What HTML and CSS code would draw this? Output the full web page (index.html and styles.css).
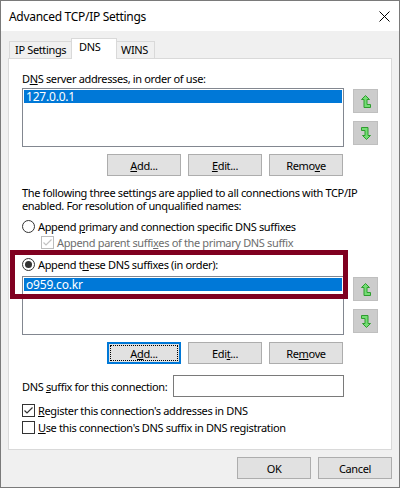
FILE: index.html
```html
<!DOCTYPE html>
<html lang="en">
<head>
  <meta charset="UTF-8" />
  <title>Advanced TCP/IP Settings</title>
  <link rel="stylesheet" href="styles.css">
</head>
<body>
<div class="window">
  <div class="titlebar">
    <span class="title">Advanced TCP/IP Settings</span>
    <svg class="close" width="11" height="11" viewBox="0 0 11 11">
      <path d="M0.5 0.5 L10.5 10.5 M10.5 0.5 L0.5 10.5" stroke="#000" stroke-width="1" fill="none"/>
    </svg>
  </div>

  <div class="content">
    <div class="tabs">
      <div class="tab tab-ip">IP Settings</div>
      <div class="tab tab-dns active">DNS</div>
      <div class="tab tab-wins">WINS</div>
    </div>

    <div class="panel">
      <div class="label">D<u>N</u>S server addresses, in order of use:</div>
      <div class="list-row">
        <div class="listbox">
          <div class="item selected">127.0.0.1</div>
        </div>
        <div class="arrows">
          <div class="arrow">
            <svg width="10" height="13" viewBox="0 0 10 13"><polygon class="arr" points="4.5,0.5 8.5,4.5 6,4.5 6,9.5 9.5,9.5 9.5,12.5 3,12.5 3,4.5 0.5,4.5"/></svg>
          </div>
          <div class="arrow">
            <svg width="10" height="13" viewBox="0 0 10 13"><polygon class="arr" transform="rotate(180 5 6.5)" points="4.5,0.5 8.5,4.5 6,4.5 6,9.5 9.5,9.5 9.5,12.5 3,12.5 3,4.5 0.5,4.5"/></svg>
          </div>
        </div>
      </div>
      <div class="btn-row">
        <div class="btn"><u>A</u>dd...</div>
        <div class="btn"><u>E</u>dit...</div>
        <div class="btn">Remo<u>v</u>e</div>
      </div>

      <p class="note">The following three settings are applied to all connections with TCP/IP enabled. For resolution of unqualified names:</p>

      <div class="opt opt-first">
        <span class="radio"></span>
        <span>Append <u>p</u>rimary and connection specific DNS suffixes</span>
      </div>
      <div class="opt opt-sub disabled">
        <span class="check checked">
          <svg width="11" height="11" viewBox="0 0 11 11"><polyline points="1.5,5.5 4,8 9.5,2.5" fill="none" stroke="#c2c2c2" stroke-width="1.2"/></svg>
        </span>
        <span>Append parent suffi<u>x</u>es of the primary DNS suffix</span>
      </div>

      <div class="opt opt-second">
        <span class="radio on"></span>
        <span>Append t<u>h</u>ese DNS suffixes (in order):</span>
      </div>
      <div class="list-row list-row-2">
        <div class="listbox">
          <div class="item selected">o959.co.kr</div>
        </div>
        <div class="arrows">
          <div class="arrow">
            <svg width="10" height="13" viewBox="0 0 10 13"><polygon class="arr" points="4.5,0.5 8.5,4.5 6,4.5 6,9.5 9.5,9.5 9.5,12.5 3,12.5 3,4.5 0.5,4.5"/></svg>
          </div>
          <div class="arrow">
            <svg width="10" height="13" viewBox="0 0 10 13"><polygon class="arr" transform="rotate(180 5 6.5)" points="4.5,0.5 8.5,4.5 6,4.5 6,9.5 9.5,9.5 9.5,12.5 3,12.5 3,4.5 0.5,4.5"/></svg>
          </div>
        </div>
      </div>
      <div class="btn-row">
        <div class="btn focused">A<u>d</u>d...</div>
        <div class="btn">Edi<u>t</u>...</div>
        <div class="btn">Re<u>m</u>ove</div>
      </div>

      <div class="suffix-row">
        <span class="suffix-label">DNS <u>s</u>uffix for this connection:</span>
        <div class="input"></div>
      </div>

      <div class="opt opt-check first">
        <span class="check checked">
          <svg width="11" height="11" viewBox="0 0 11 11"><polyline points="1.5,5.5 4,8 9.5,2.5" fill="none" stroke="#333" stroke-width="1.2"/></svg>
        </span>
        <span><u>R</u>egister this connection's addresses in DNS</span>
      </div>
      <div class="opt opt-check">
        <span class="check"></span>
        <span><u>U</u>se this connection's DNS suffix in DNS registration</span>
      </div>

      <!-- annotation frame drawn over the suffix option -->
      <div class="highlight"></div>
    </div>

    <div class="footer">
      <div class="btn">OK</div>
      <div class="btn">Cancel</div>
    </div>
  </div>
</div>
</body>
</html>
```

FILE: styles.css
```css
* {
  box-sizing: border-box;
}
body {
  margin: 0;
  font-family: "Noto Sans", sans-serif;
  font-size: 11px;
  letter-spacing: -0.35px;
  color: #000;
  background: #fff;
}
u {
  text-underline-offset: 1px;
}

.window {
  width: 400px;
  height: 488px;
  border: 1px solid #7a7a7a;
  background: #f0f0f0;
  display: flex;
  flex-direction: column;
}
.titlebar {
  height: 30px;
  background: #fff;
  display: flex;
  align-items: center;
  justify-content: space-between;
  padding: 0 9px 0 8px;
}
.title {
  font-size: 12px;
  letter-spacing: -0.3px;
}
.close {
  display: block;
}

.content {
  padding: 7px 7px 0;
}

/* tabs */
.tabs {
  display: flex;
  align-items: flex-end;
  height: 21px;
  padding-left: 1px;
  margin-bottom: -1px;
  position: relative;
  z-index: 1;
}
.tab {
  height: 17px;
  margin-bottom: 1px;
  margin-right: -1px;
  border: 1px solid #d9d9d9;
  border-bottom: none;
  background: #f0f0f0;
  line-height: 16px;
  white-space: nowrap;
}
.tab-ip {
  width: 63px;
  padding-left: 5px;
}
.tab-dns {
  width: 46px;
  padding-left: 7px;
}
.tab-wins {
  width: 39px;
  padding-left: 4px;
}
.tab.active {
  height: 21px;
  margin-bottom: 0;
  background: #fff;
  position: relative;
  z-index: 2;
}

.panel {
  position: relative;
  height: 392px;
  background: #fff;
  border: 1px solid #d9d9d9;
  padding: 12px 13px 0;
}

.label {
  line-height: 15px;
  height: 15px;
}

.list-row {
  display: flex;
  gap: 9px;
  margin-top: 2px;
}
.list-row-2 {
  margin-top: 4px;
}
.listbox {
  width: 322px;
  height: 59px;
  border: 1px solid #828790;
  padding: 1px;
  background: #fff;
}
.item {
  height: 13px;
  line-height: 13px;
  padding-left: 2px;
  font-size: 12px;
  letter-spacing: -0.2px;
}
.item.selected {
  background: #0078d7;
  color: #fff;
}
.arrows {
  display: flex;
  flex-direction: column;
  gap: 8px;
  margin-top: 1px;
}
.arrow {
  width: 25px;
  height: 24px;
  background: #cccccc;
  border: 1px solid #bfbfbf;
  display: flex;
  align-items: center;
  justify-content: center;
}
.arrow svg {
  display: block;
}
.arr {
  fill: #74dd74;
  stroke: #2e9c2e;
  stroke-width: 1;
}

.btn-row {
  display: flex;
  justify-content: flex-end;
  gap: 7px;
  width: 321px;
  margin-top: 7px;
}
.btn {
  position: relative;
  width: 74px;
  height: 22px;
  background: #e1e1e1;
  border: 1px solid #adadad;
  display: flex;
  align-items: center;
  justify-content: center;
  line-height: 15px;
}
.btn.focused {
  border: 2px solid #0078d7;
}
.btn.focused::after {
  content: "";
  position: absolute;
  left: 1px;
  top: 1px;
  right: 1px;
  bottom: 1px;
  border: 1px dotted #000;
}

.note {
  margin: 10px 0 0;
  line-height: 13px;
}

.opt {
  display: flex;
  align-items: center;
  gap: 3px;
  height: 16px;
  white-space: nowrap;
}
.opt-first {
  margin-top: 6px;
}
.opt-sub {
  padding-left: 19px;
}
.opt-second {
  margin-top: 6px;
}
.opt.disabled {
  color: #6d6d6d;
}
.opt-check {
  height: 17px;
}
.opt-check.first {
  margin-top: 5px;
}

.radio {
  width: 13px;
  height: 13px;
  border: 1px solid #333;
  border-radius: 50%;
  background: #fff;
  display: flex;
  align-items: center;
  justify-content: center;
  flex: none;
}
.radio.on::after {
  content: "";
  width: 7px;
  height: 7px;
  border-radius: 50%;
  background: #333;
}
.check {
  width: 13px;
  height: 13px;
  border: 1px solid #333;
  background: #fff;
  flex: none;
}
.check svg {
  display: block;
}
.disabled .check {
  border-color: #bcbcbc;
}

.suffix-row {
  display: flex;
  align-items: center;
  margin-top: 11px;
  height: 22px;
}
.suffix-label {
  width: 151px;
  white-space: nowrap;
}
.input {
  width: 171px;
  height: 22px;
  border: 1px solid #7a7a7a;
  background: #fff;
}

.highlight {
  position: absolute;
  left: 1px;
  top: 191px;
  width: 338px;
  height: 49px;
  border: 5px solid #800020;
}

.footer {
  display: flex;
  justify-content: flex-end;
  gap: 7px;
  margin-top: 7px;
}
```
